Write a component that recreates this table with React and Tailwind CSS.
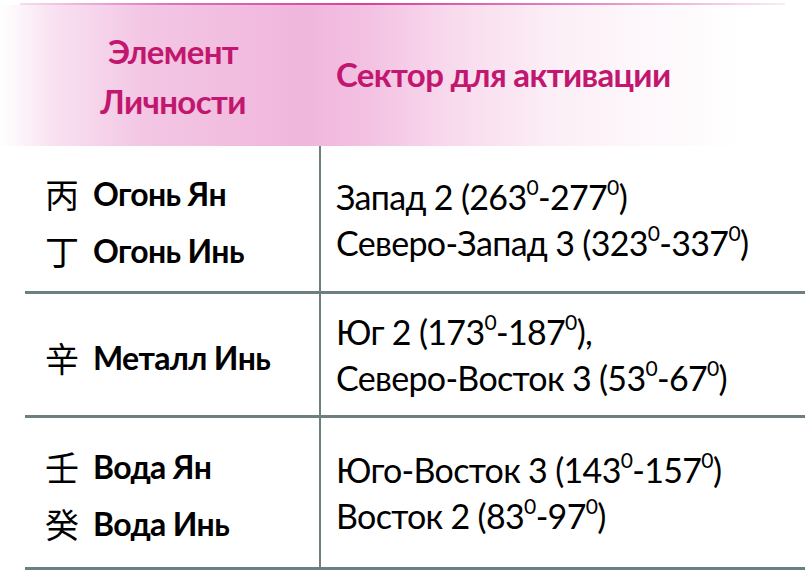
import React from "react";

const Deg = () => <sup className="text-[0.62em] top-[-0.68em]">0</sup>;

function Left({ items }) {
  return (
    <div className="flex flex-col gap-[23px] pl-[20px]">
      {items.map(([ch, txt]) => (
        <div key={txt} className="flex items-center gap-[14px] h-[34px]">
          <span className="text-[34px] leading-none font-['Noto_Sans_CJK_SC',sans-serif] text-black">{ch}</span>
          <span className="text-[32px] leading-none font-bold text-black tracking-[-0.02em]">{txt}</span>
        </div>
      ))}
    </div>
  );
}

function Right({ lines }) {
  return (
    <div className="flex flex-col pl-[15px] text-[34px] leading-[46px] text-black tracking-[-0.02em]">
      {lines.map((l, i) => (
        <div key={i}>{l}</div>
      ))}
    </div>
  );
}

export default function App() {
  return (
    <div className="w-[805px] h-[574px] bg-white overflow-hidden font-['Lato','Liberation_Sans',sans-serif]">
      <div className="h-[3px]" />
      <div className="h-[2px] mx-[20px] bg-[linear-gradient(90deg,rgba(225,80,170,0.2),#e070bc_20%,#d9409c_45%,#e58cc6_75%,rgba(240,190,225,0.3))]" />
      <div className="h-[141px] flex bg-[linear-gradient(90deg,#ffffff_0%,#f8e0f0_7%,#f3c6e4_18%,#f0b6dc_38%,#f3c2e3_46%,#f8daed_56%,#fcf0f7_70%,#ffffff_92%)]">
        <div className="w-[321px] pl-[25px] flex flex-col items-center justify-center text-[33px] font-bold text-[#c2176f] leading-[50px] tracking-[-0.02em]">
          <div>Элемент</div>
          <div>Личности</div>
        </div>
        <div className="flex-1 flex items-center pl-[15px] text-[33px] font-bold text-[#c2176f] tracking-[-0.02em] pb-[2px]">
          Сектор для активации
        </div>
      </div>
      <div className="ml-[25px]">
        <div className="h-[148px] flex border-b-[3px] border-[#6d7f7f]">
          <div className="w-[296px] border-r-2 border-[#6d7f7f] flex items-center pt-[8px]">
            <Left items={[["丙", "Огонь Ян"], ["丁", "Огонь Инь"]]} />
          </div>
          <div className="flex-1 flex items-center pt-[2px]">
            <Right
              lines={[
                <>Запад 2 (263<Deg />-277<Deg />)</>,
                <>Северо-Запад 3 (323<Deg />-337<Deg />)</>,
              ]}
            />
          </div>
        </div>
        <div className="h-[124px] flex border-b-[3px] border-[#6d7f7f]">
          <div className="w-[296px] border-r-2 border-[#6d7f7f] flex items-center pt-[6px]">
            <Left items={[["辛", "Металл Инь"]]} />
          </div>
          <div className="flex-1 flex items-center">
            <Right
              lines={[
                <>Юг 2 (173<Deg />-187<Deg />),</>,
                <>Северо-Восток 3 (53<Deg />-67<Deg />)</>,
              ]}
            />
          </div>
        </div>
        <div className="h-[152px] flex border-b-[3px] border-[#6d7f7f]">
          <div className="w-[296px] border-r-2 border-[#6d7f7f] flex items-center pt-[6px]">
            <Left items={[["壬", "Вода Ян"], ["癸", "Вода Инь"]]} />
          </div>
          <div className="flex-1 flex items-center">
            <Right
              lines={[
                <>Юго-Восток 3 (143<Deg />-157<Deg />)</>,
                <>Восток 2 (83<Deg />-97<Deg />)</>,
              ]}
            />
          </div>
        </div>
      </div>
    </div>
  );
}
